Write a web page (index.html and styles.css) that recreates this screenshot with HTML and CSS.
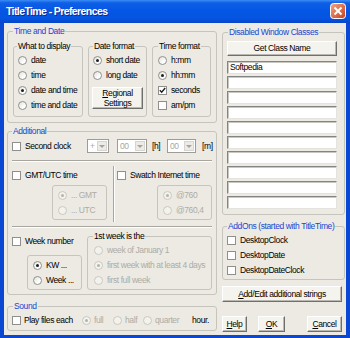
FILE: index.html
```html
<!DOCTYPE html>
<html lang="en">
<head>
    <meta charset="UTF-8">
    <title>TitleTime - Preferences</title>
    <link rel="stylesheet" href="styles.css">
</head>
<body>
    <div class="window">
        <div class="titlebar">
            <span class="title">TitleTime - Preferences</span>
            <span class="close">
                <svg width="16" height="16" viewBox="0 0 16 16">
                    <defs>
                        <linearGradient id="cg" x1="0" y1="0" x2="1" y2="1">
                            <stop offset="0" stop-color="#f3a587"/>
                            <stop offset="1" stop-color="#c8401a"/>
                        </linearGradient>
                    </defs>
                    <rect x="0.5" y="0.5" width="15" height="15" rx="3" fill="url(#cg)" stroke="#fff"/>
                    <path d="M4.5 4.5l7 7M11.5 4.5l-7 7" stroke="#fff" stroke-width="2"/>
                </svg>
            </span>
        </div>

        <div class="client">
            <div class="col-left">
                <!-- Time and Date -->
                <fieldset class="group td">
                    <legend>Time and Date</legend>
                    <div class="td-row">
                        <fieldset class="frame display">
                            <legend>What to display</legend>
                            <div class="opt"><span class="radio"></span>date</div>
                            <div class="opt"><span class="radio"></span>time</div>
                            <div class="opt"><span class="radio on"></span>date and time</div>
                            <div class="opt"><span class="radio"></span>time and date</div>
                        </fieldset>
                        <fieldset class="frame datefmt">
                            <legend>Date format</legend>
                            <div class="opt"><span class="radio on"></span>short date</div>
                            <div class="opt"><span class="radio"></span>long date</div>
                            <button class="btn regional"><span><u>R</u>egional<br>Settings</span></button>
                        </fieldset>
                        <fieldset class="frame timefmt">
                            <legend>Time format</legend>
                            <div class="opt"><span class="radio"></span>h:mm</div>
                            <div class="opt"><span class="radio on"></span>hh:mm</div>
                            <div class="opt">
                                <span class="check">
                                    <svg width="7" height="7" viewBox="0 0 7 7"><path d="M0.8 3.2l1.9 2 3.5-4.2" fill="none" stroke="#1e1e1e" stroke-width="1.4"/></svg>
                                </span>seconds
                            </div>
                            <div class="opt"><span class="check"></span>am/pm</div>
                        </fieldset>
                    </div>
                </fieldset>

                <!-- Additional -->
                <fieldset class="group additional">
                    <legend>Additional</legend>
                    <div class="clock-row">
                        <div class="opt clock-opt"><span class="check"></span>Second clock</div>
                        <div class="combo plus"><span class="val">+</span><span class="arrow"></span></div>
                        <div class="combo hrs"><span class="val">00</span><span class="arrow"></span></div>
                        <span class="unit">[h]</span>
                        <div class="combo mins"><span class="val">00</span><span class="arrow"></span></div>
                        <span class="unit unit-m">[m]</span>
                    </div>
                    <div class="sep"></div>
                    <div class="zone-row">
                        <div class="zone zone-gmt">
                            <div class="opt"><span class="check"></span>GMT/UTC time</div>
                            <div class="subbox off">
                                <div class="opt"><span class="radio on"></span>... GMT</div>
                                <div class="opt"><span class="radio"></span>... UTC</div>
                            </div>
                        </div>
                        <div class="vsep"></div>
                        <div class="zone zone-swatch">
                            <div class="opt"><span class="check"></span>Swatch Internet time</div>
                            <div class="subbox off">
                                <div class="opt"><span class="radio on"></span>@760</div>
                                <div class="opt"><span class="radio"></span>@760,4</div>
                            </div>
                        </div>
                    </div>
                    <div class="sep sep-week"></div>
                    <div class="week-row">
                        <div class="week-left">
                            <div class="opt"><span class="check"></span>Week number</div>
                            <div class="subbox kwbox">
                                <div class="opt"><span class="radio on"></span>KW ...</div>
                                <div class="opt"><span class="radio"></span>Week ...</div>
                            </div>
                        </div>
                        <fieldset class="frame firstweek">
                            <legend>1st week is the</legend>
                            <div class="opt off"><span class="radio"></span>week of January 1</div>
                            <div class="opt off"><span class="radio on"></span>first week with at least 4 days</div>
                            <div class="opt off"><span class="radio"></span>first full week</div>
                        </fieldset>
                    </div>
                </fieldset>

                <!-- Sound -->
                <fieldset class="group sound">
                    <legend>Sound</legend>
                    <div class="sound-row">
                        <div class="opt play"><span class="check"></span>Play files each</div>
                        <div class="opt off full"><span class="radio on"></span>full</div>
                        <div class="opt off half"><span class="radio"></span>half</div>
                        <div class="opt off quarter"><span class="radio"></span>quarter</div>
                        <span>hour.</span>
                    </div>
                </fieldset>
            </div>

            <div class="col-right">
                <fieldset class="group classes">
                    <legend>Disabled Window Classes</legend>
                    <button class="btn getclass">Get Class Name</button>
                    <div class="fields">
                        <div class="field">Softpedia</div>
                        <div class="field"></div>
                        <div class="field"></div>
                        <div class="field"></div>
                        <div class="field"></div>
                        <div class="field"></div>
                        <div class="field"></div>
                        <div class="field"></div>
                        <div class="field"></div>
                        <div class="field"></div>
                    </div>
                </fieldset>

                <fieldset class="group addons">
                    <legend>AddOns (started with TitleTime)</legend>
                    <div class="opt"><span class="check"></span>DesktopClock</div>
                    <div class="opt"><span class="check"></span>DesktopDate</div>
                    <div class="opt"><span class="check"></span>DesktopDateClock</div>
                </fieldset>

                <button class="btn addedit"><u>A</u>dd/Edit additional strings</button>

                <div class="actions">
                    <button class="btn help"><u>H</u>elp</button>
                    <button class="btn ok"><u>O</u>K</button>
                    <button class="btn cancel"><u>C</u>ancel</button>
                </div>
            </div>
        </div>
    </div>
</body>
</html>
```

FILE: styles.css
```css
:root {
    --face: #eceae3;
    --frame: #c6c5bd;
    --caption: #1a46d2;
    --shadow: #a7a6a0;
    --disabled: #adaca5;
}

* {
    margin: 0;
    padding: 0;
    box-sizing: border-box;
}

body {
    width: 350px;
    height: 338px;
    overflow: hidden;
    font-family: "Liberation Sans", Arial, sans-serif;
    font-size: 8.5px;
    letter-spacing: -0.4px;
    line-height: 11px;
    color: #000;
    background: #fff;
}

.window {
    width: 350px;
    height: 338px;
    background: #0a48d4;
    display: flex;
    flex-direction: column;
}

.titlebar {
    height: 23px;
    flex: none;
    display: flex;
    align-items: center;
    padding: 0 4px 1px 6px;
    background: linear-gradient(#3c8cf6 0%, #0f60e6 12%, #0556e4 45%, #0554e2 80%, #0745c8 100%);
}

.title {
    color: #fff;
    font-size: 10.5px;
    font-weight: bold;
    letter-spacing: -0.6px;
    text-shadow: 1px 1px 0 #0b2b98;
}

.close {
    margin-left: auto;
    display: flex;
}

.client {
    flex: 1;
    margin: 0 4px 3px 4px;
    background: var(--face);
    padding: 2px 1px 0 3px;
    display: flex;
    gap: 5px;
}

.col-left {
    width: 210px;
    display: flex;
    flex-direction: column;
}

.col-right {
    width: 123px;
    display: flex;
    flex-direction: column;
}

fieldset {
    border: 1px solid var(--frame);
    border-radius: 3px;
    min-width: 0;
    flex: none;
}

legend {
    padding: 0 1px;
    height: 12px;
    line-height: 12px;
    white-space: nowrap;
}

.group > legend {
    color: var(--caption);
}

/* options */

.opt {
    display: flex;
    align-items: center;
    gap: 4px;
    height: 15px;
    white-space: nowrap;
}

.radio {
    width: 9px;
    height: 9px;
    flex: none;
    border-radius: 50%;
    border: 1px solid #8f908e;
    background: linear-gradient(135deg, #e2e1da, #fff 70%);
    display: grid;
    place-items: center;
}

.radio.on::after {
    content: "";
    width: 3px;
    height: 3px;
    border-radius: 50%;
    background: #1f1f1f;
}

.check {
    width: 9px;
    height: 9px;
    flex: none;
    border: 1px solid #8f908e;
    background: #fff;
    display: grid;
    place-items: center;
}

.off {
    color: var(--disabled);
}

.off .radio {
    border-color: #c9c8c0;
    background: #f3f2ed;
}

.off .radio.on::after {
    background: #b4b3ab;
}

.btn {
    font: inherit;
    letter-spacing: inherit;
    color: #000;
    background: #f4f3ee;
    border: 1px solid;
    border-color: #fff #6f6f6c #6f6f6c #fff;
    box-shadow: inset -1px -1px 0 #b9b8b2;
    display: flex;
    align-items: center;
    justify-content: center;
    text-align: center;
    flex: none;
}

/* time and date */

.td {
    padding: 3px 5px 5px 5px;
}

.td-row {
    display: flex;
    gap: 5px;
}

.frame {
    padding: 1px 4px 3px 4px;
}

.display {
    width: 70px;
}

.display legend {
    margin-left: -1px;
}

.datefmt {
    width: 59px;
}

.timefmt {
    width: 59px;
    padding-left: 5px;
}

.regional {
    width: 51px;
    height: 22px;
    margin: 4px 0 0 -1px;
    line-height: 10px;
}

/* additional */

.additional {
    margin-top: 2px;
    padding: 1px 4px 4px 4px;
}

.clock-row {
    display: flex;
    align-items: center;
    height: 16px;
}

.clock-opt {
    width: 75px;
}

.combo {
    height: 14px;
    display: flex;
    border: 1px solid #9d9c98;
    background: #fff;
    color: #a9a8a2;
}

.combo .val {
    flex: 1;
    padding-left: 2px;
    line-height: 12px;
}

.combo .arrow {
    width: 10px;
    margin: 1px;
    background: #ecebe6;
    border: 1px solid #d6d5cf;
    display: grid;
    place-items: center;
}

.combo .arrow::after {
    content: "";
    border-left: 3px solid transparent;
    border-right: 3px solid transparent;
    border-top: 3px solid #a5a49e;
}

.plus {
    width: 22px;
}

.hrs {
    width: 30px;
    margin-left: 8px;
}

.unit {
    margin-left: 5px;
    width: 9px;
}

.mins {
    width: 29px;
    margin-left: 6px;
}

.unit-m {
    margin-left: 6px;
}

.sep {
    height: 2px;
    margin-top: 6px;
    border-top: 1px solid var(--shadow);
    border-bottom: 1px solid #fff;
}

.sep-week {
    margin-top: 4px;
}

.zone-row {
    display: flex;
    height: 56px;
    margin-top: 4px;
}

.zone {
    padding-top: 2px;
}

.zone-gmt {
    width: 101px;
}

.vsep {
    width: 2px;
    border-left: 1px solid var(--shadow);
    border-right: 1px solid #fff;
}

.zone-swatch {
    margin-left: 2px;
    flex: 1;
}

.subbox {
    width: 55px;
    height: 35px;
    margin: 2px 0 0 40px;
    padding: 2px 5px 1px 5px;
    border: 1px solid var(--frame);
    border-radius: 3px;
}

.week-row {
    display: flex;
}

.week-left {
    width: 75px;
    padding-top: 6px;
}

.kwbox {
    margin: 6px 0 0 15px;
}

.firstweek {
    width: 125px;
    margin-top: 2px;
    padding: 1px 6px 1px 6px;
}

.firstweek legend {
    margin-left: -1px;
}

/* sound */

.sound {
    margin-top: 5px;
    padding: 1px 4px 2px 4px;
}

.sound legend {
    margin-left: 1px;
}

.sound-row {
    display: flex;
    align-items: center;
    height: 15px;
}

.sound-row .opt {
    gap: 3px;
}

.play {
    width: 70px;
}

.full {
    width: 31px;
}

.half {
    width: 30px;
}

.quarter {
    width: 49px;
}

/* right column */

.classes {
    margin-top: 1px;
    padding: 3px 7px 5px 4px;
}

.classes legend {
    margin-left: 1px;
}

.getclass {
    width: 110px;
    height: 15px;
}

.fields {
    margin-top: 5px;
    display: flex;
    flex-direction: column;
    gap: 2px;
}

.field {
    height: 13px;
    padding-left: 2px;
    line-height: 11px;
    background: #fff;
    border: 1px solid;
    border-color: #848482 #e4e3dd #e4e3dd #848482;
    box-shadow: inset 1px 1px 0 #c8c7c1;
}

.addons {
    margin-top: 5px;
    padding: 1px 4px 1px 4px;
}

.addedit {
    width: 120px;
    height: 16px;
    margin-top: 6px;
}

.actions {
    display: flex;
    margin-top: 14px;
}

.actions .btn {
    height: 16px;
}

.help {
    width: 25px;
}

.ok {
    width: 27px;
    margin-left: 11px;
}

.cancel {
    width: 35px;
    margin-left: 22px;
}
```
